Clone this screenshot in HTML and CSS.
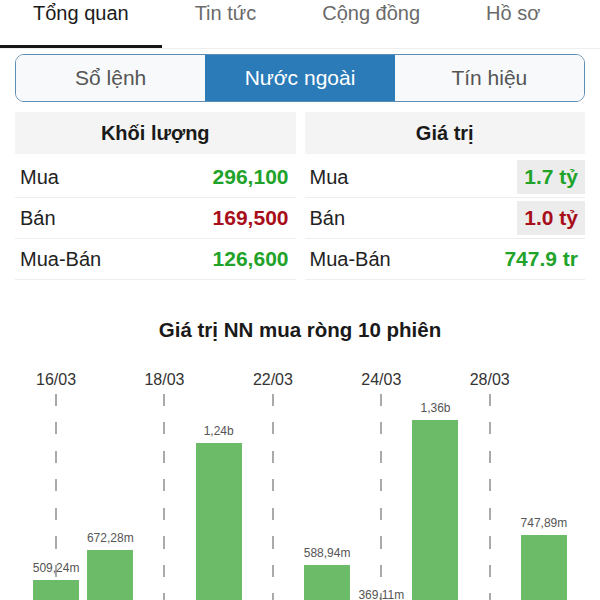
FILE: index.html
```html
<!DOCTYPE html>
<html lang="vi">
<head>
    <meta charset="UTF-8">
    <meta name="viewport" content="width=device-width, initial-scale=1.0">
    <title>Nước ngoài</title>
    <link rel="stylesheet" href="styles.css">
</head>
<body>
    <!-- Вкладки сверху -->
    <div class="tabs">
        <div class="tab active">Tổng quan</div>
        <div class="tab">Tin tức</div>
        <div class="tab">Cộng đồng</div>
        <div class="tab">Hồ sơ</div>
    </div>

    <div class="content">
        <div class="segmented">
            <div class="seg">Sổ lệnh</div>
            <div class="seg active">Nước ngoài</div>
            <div class="seg">Tín hiệu</div>
        </div>

        <div class="stats">
            <div class="stat-table">
                <div class="stat-head">Khối lượng</div>
                <div class="stat-row"><span class="label">Mua</span><span class="value up">296,100</span></div>
                <div class="stat-row"><span class="label">Bán</span><span class="value down">169,500</span></div>
                <div class="stat-row"><span class="label">Mua-Bán</span><span class="value up">126,600</span></div>
            </div>
            <div class="stat-table">
                <div class="stat-head">Giá trị</div>
                <div class="stat-row"><span class="label">Mua</span><span class="value up boxed">1.7 tỷ</span></div>
                <div class="stat-row"><span class="label">Bán</span><span class="value down boxed">1.0 tỷ</span></div>
                <div class="stat-row"><span class="label">Mua-Bán</span><span class="value up">747.9 tr</span></div>
            </div>
        </div>

        <h2 class="chart-title">Giá trị NN mua ròng 10 phiên</h2>

        <div class="chart">
            <div class="dates" id="dates"></div>
            <div class="bars" id="bars"></div>
        </div>
    </div>

    <script>
        // 10 phiên, nhãn ngày chỉ ở cột chẵn
        const sessions = [
            { date: '16/03', value: 509.24, text: '509,24m' },
            { date: '',      value: 672.28, text: '672,28m' },
            { date: '18/03', value: 0,      text: '' },
            { date: '',      value: 1240,   text: '1,24b' },
            { date: '22/03', value: 0,      text: '' },
            { date: '',      value: 588.94, text: '588,94m' },
            { date: '24/03', value: 369.11, text: '369,11m' },
            { date: '',      value: 1360,   text: '1,36b' },
            { date: '28/03', value: 0,      text: '' },
            { date: '',      value: 747.89, text: '747,89m' }
        ];
        const scale = 0.188; // px на 1 млн

        const datesEl = document.getElementById('dates');
        const barsEl = document.getElementById('bars');

        sessions.forEach((s, i) => {
            const d = document.createElement('div');
            d.className = 'date';
            d.textContent = s.date;
            datesEl.appendChild(d);

            const col = document.createElement('div');
            col.className = i % 2 === 0 ? 'col marked' : 'col';

            if (s.text) {
                const cap = document.createElement('div');
                cap.className = 'bar-label';
                cap.textContent = s.text;
                col.appendChild(cap);
            }

            const bar = document.createElement('div');
            bar.className = 'bar';
            bar.style.height = (s.value * scale) + 'px';
            col.appendChild(bar);

            barsEl.appendChild(col);
        });
    </script>
</body>
</html>
```

FILE: styles.css
```css
body {
    margin: 0;
    font-family: "Liberation Sans", Arial, sans-serif;
    color: #222;
    background: #fff;
}
.tabs {
    display: flex;
    border-bottom: 1px solid #eee;
}
.tab {
    padding: 1px 33px 20px;
    font-size: 20px;
    line-height: 24px;
    color: #6a6a6a;
    border-bottom: 3px solid transparent;
}
.tab.active {
    color: #1a1a1a;
    border-bottom-color: #161616;
}
.content {
    padding: 5px 15px 0;
}
.segmented {
    display: flex;
    border: 1.5px solid #5b8db5;
    border-radius: 9px;
    overflow: hidden;
}
.seg {
    flex: 1;
    text-align: center;
    font-size: 21px;
    line-height: 46px;
    color: #555;
    background: #f8f9fa;
}
.seg.active {
    background: #2b7bb8;
    color: #fff;
}
.stats {
    display: grid;
    grid-template-columns: 1fr 1fr;
    gap: 9px;
    margin-top: 10px;
}
.stat-head {
    height: 42px;
    line-height: 42px;
    margin-bottom: 3px;
    background: #f4f4f4;
    text-align: center;
    font-size: 20px;
    font-weight: bold;
    color: #1a1a1a;
}
.stat-row {
    display: flex;
    justify-content: space-between;
    align-items: center;
    height: 40px;
    padding-left: 5px;
    border-bottom: 1px solid #eee;
}
.label {
    font-size: 20px;
}
.value {
    padding: 0 7px;
    font-size: 21px;
    font-weight: bold;
    line-height: 34px;
}
.value.boxed {
    background: #ececec;
}
.up {
    color: #21a32a;
}
.down {
    color: #a80e1a;
}
.chart-title {
    margin: 38px 0 0;
    text-align: center;
    font-size: 20.5px;
    line-height: 24px;
    color: #1a1a1a;
}
.chart {
    margin: 28px 14px 0;
}
.dates, .bars {
    display: grid;
    grid-template-columns: repeat(10, 1fr);
}
.date {
    height: 20px;
    text-align: center;
    font-size: 16px;
    line-height: 20px;
    color: #333;
}
.bars {
    height: 282px;
    margin-top: 4px;
}
.col {
    display: flex;
    flex-direction: column;
    justify-content: flex-end;
    align-items: center;
}
.col.marked {
    background-image: repeating-linear-gradient(to bottom, #aaa 0 12px, transparent 12px 28.5px);
    background-size: 2px 100%;
    background-position: center top;
    background-repeat: no-repeat;
}
.bar-label {
    font-size: 12px;
    line-height: 14px;
    margin-bottom: 5px;
    color: #555;
}
.bar {
    width: 46px;
    background: #6cbb69;
}
```
